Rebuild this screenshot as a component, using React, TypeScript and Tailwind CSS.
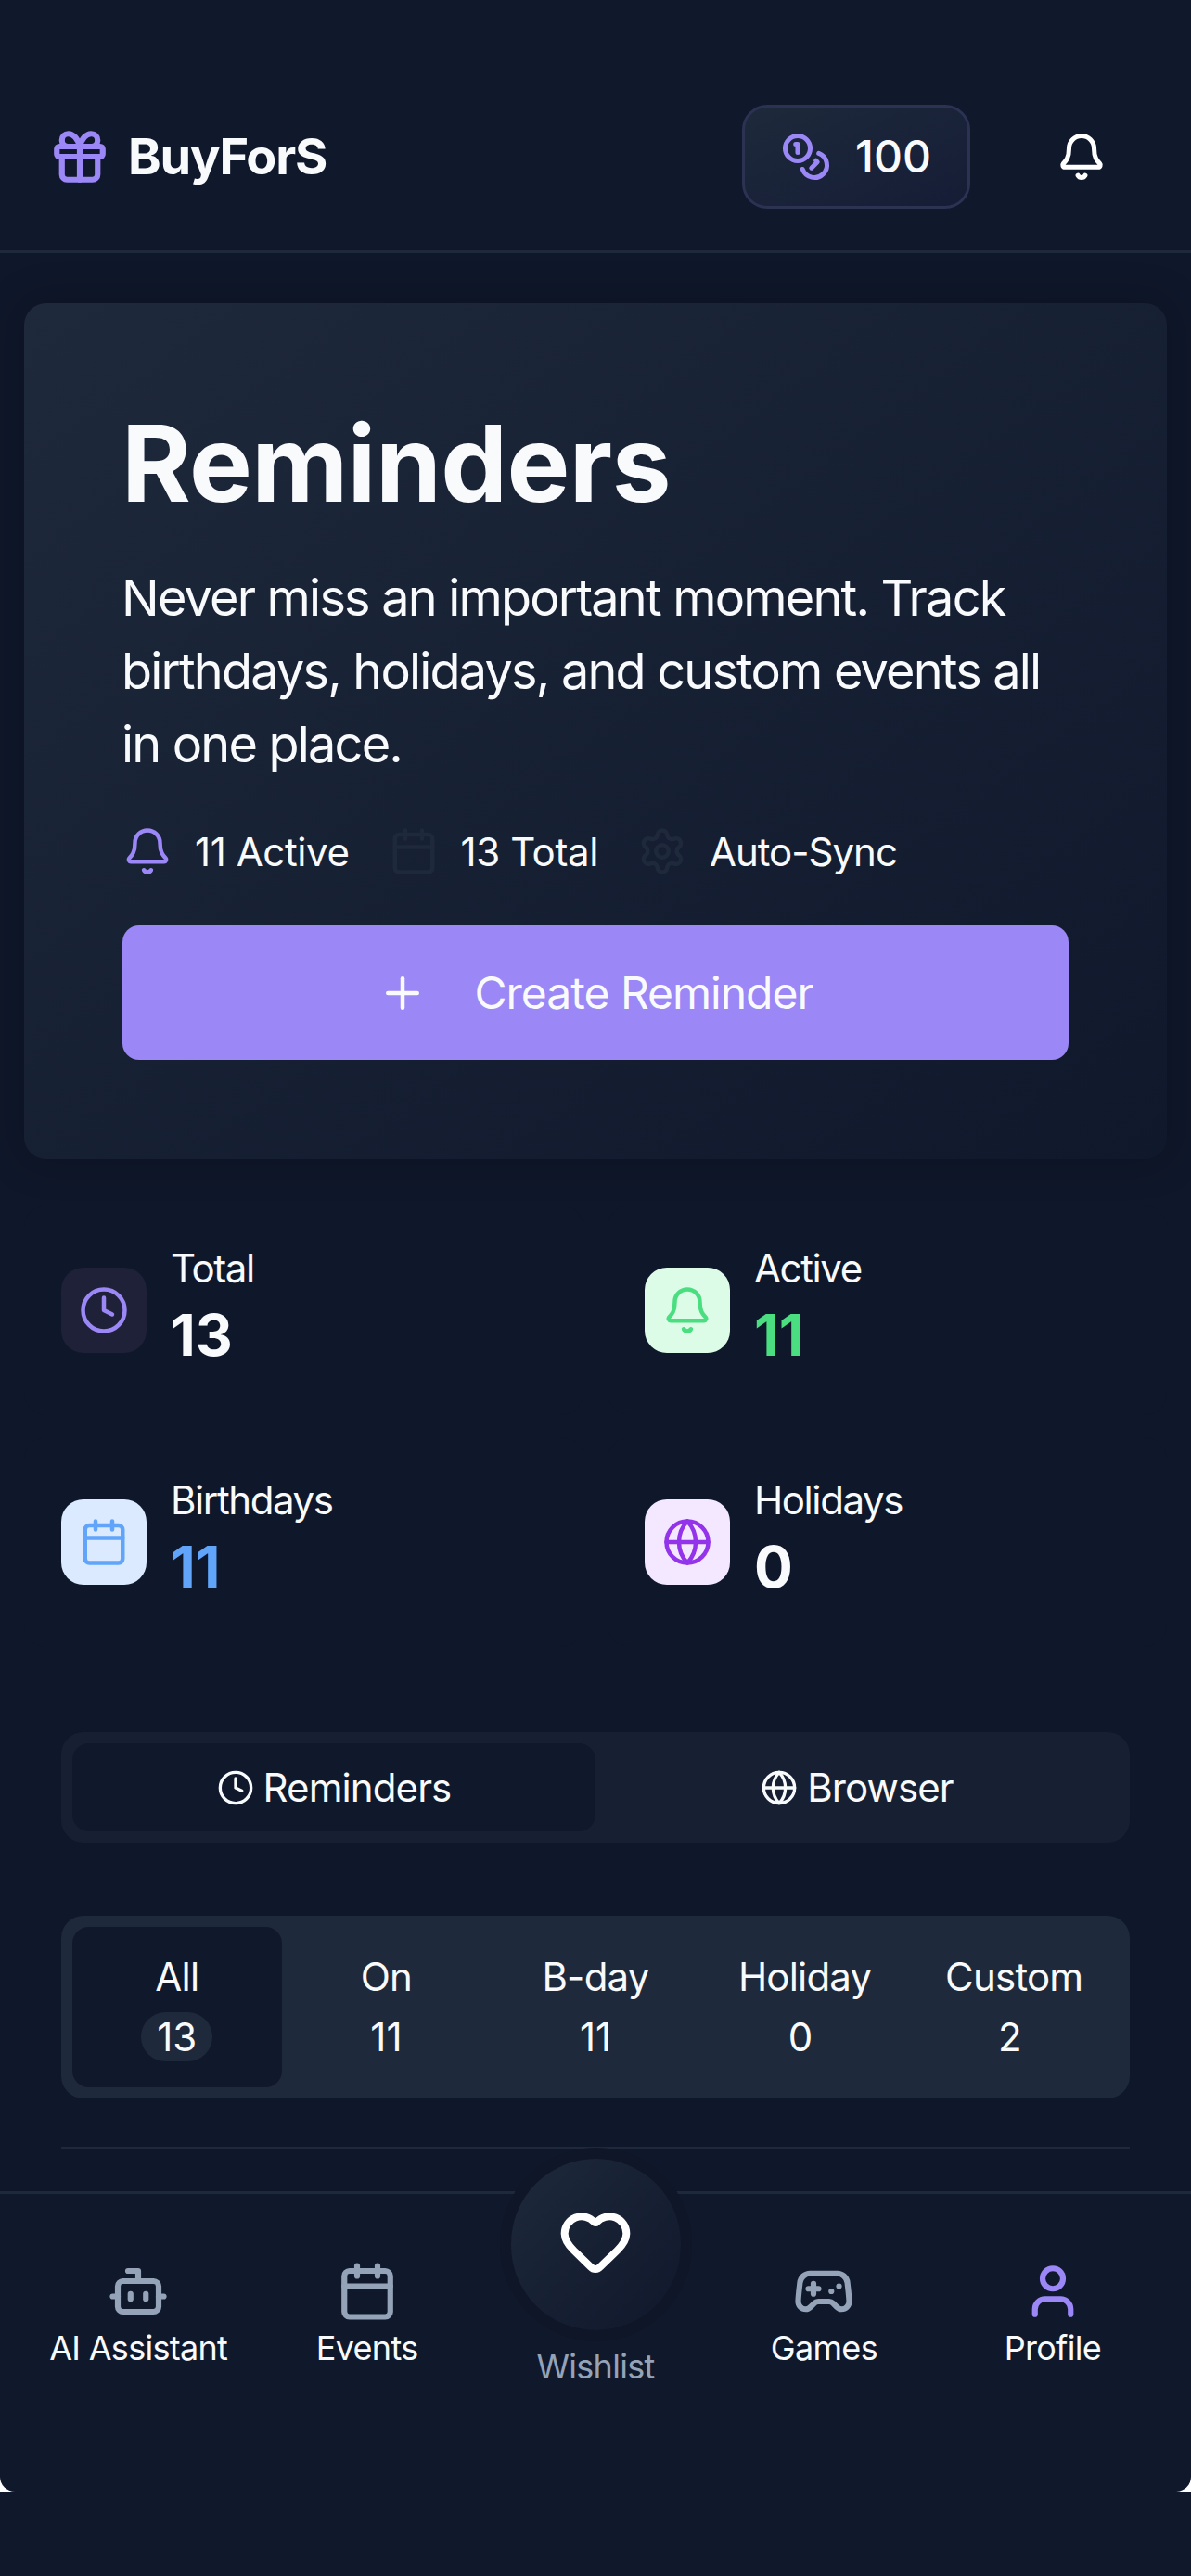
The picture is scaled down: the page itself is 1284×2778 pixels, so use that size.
import { Bell, Bot, Calendar, Clock, Coins, Gamepad2, Gift, Globe, Heart, Plus, Settings, User } from "lucide-react";

const stats = [
  { label: "Total", value: "13", Icon: Clock, box: "bg-[#1e2138]", icon: "text-[#9b87f5]", val: "text-[#f8fafc]" },
  { label: "Active", value: "11", Icon: Bell, box: "bg-[#dcfce7]", icon: "text-[#4ade80]", val: "text-[#4ade80]" },
  { label: "Birthdays", value: "11", Icon: Calendar, box: "bg-[#dbeafe]", icon: "text-[#60a5fa]", val: "text-[#60a5fa]" },
  { label: "Holidays", value: "0", Icon: Globe, box: "bg-[#f3e8ff]", icon: "text-[#9333ea]", val: "text-[#f8fafc]" },
];

const filters = [
  { label: "All", count: "13", active: true },
  { label: "On", count: "11" },
  { label: "B-day", count: "11" },
  { label: "Holiday", count: "0", nudge: true },
  { label: "Custom", count: "2", nudge: true },
];

export default function App() {
  return (
    <div className="h-[2778px] bg-[#10182c] font-['Inter',sans-serif] text-[#f8fafc]">
      <div className="flex h-[2687px] flex-col overflow-hidden bg-white">
        {/* Header */}
        <header className="flex h-[273px] shrink-0 items-center justify-between border-b-[3px] border-[#1e293b] bg-[#10182c] pb-[45px] pl-[53px] pr-[91px] pt-[113px]">
          <div className="flex items-center gap-[19px]">
            <Gift size={66} strokeWidth={2.25} className="text-[#9b87f5]" />
            <span className="text-[54px] font-bold leading-none tracking-[-1.2px]">BuyForS</span>
          </div>
          <div className="flex items-center gap-[93px]">
            <div className="flex h-[112px] w-[246px] items-center justify-center gap-[26px] rounded-[27px] border-[3px] border-[#2b3252] bg-gradient-to-br from-[#1e293b] to-[#151d36]">
              <Coins size={54} strokeWidth={2.25} className="text-[#9b87f5]" />
              <span className="text-[48px] font-medium leading-none">100</span>
            </div>
            <Bell size={54} strokeWidth={2.25} className="text-white" />
          </div>
        </header>

        {/* Content */}
        <main className="min-h-0 flex-1 overflow-hidden bg-[#0f172a] px-[26px] pt-[54px]">
          <section className="rounded-[24px] bg-gradient-to-br from-[#1e293b] to-[#10182c] px-[106px] pb-[107px] pt-[107px] shadow-[0_0_40px_rgba(8,12,24,0.35)]">
            <h1 className="-ml-[1px] text-[114px] font-bold leading-[132px] tracking-[-0.6px]">Reminders</h1>
            <p className="-ml-[1px] mt-[39px] text-[54px] leading-[79px] tracking-[-1.8px]">
              Never miss an important moment. Track birthdays, holidays, and custom events all in one place.
            </p>
            <div className="mt-[49px] flex h-[54px] items-center text-[42px] tracking-[-0.4px]">
              <Bell size={54} strokeWidth={2} className="text-[#9b87f5]" />
              <span className="ml-[24px]">11 Active</span>
              <Calendar size={54} strokeWidth={2} className="ml-[42px] text-[#1e293b]" />
              <span className="ml-[24px]">13 Total</span>
              <Settings size={54} strokeWidth={2} className="ml-[42px] text-[#1e293b]" />
              <span className="ml-[24px] tracking-[-1px]">Auto-Sync</span>
            </div>
            <button className="mt-[53px] flex h-[145px] w-full items-center justify-center gap-[50px] rounded-[18px] bg-[#9b87f5] text-[48px] tracking-[-1px]">
              <Plus size={54} strokeWidth={2} />
              Create Reminder
            </button>
          </section>

          {/* Stats */}
          <div className="mt-[50px] grid grid-cols-2 gap-x-[26px] gap-y-[24px]">
            {stats.map(({ label, value, Icon, box, icon, val }) => (
              <div key={label} className="flex h-[226px] items-center gap-[26px] rounded-[24px] bg-[#0f172b] px-[40px]">
                <div className={`flex h-[92px] w-[92px] items-center justify-center rounded-[24px] ${box}`}>
                  <Icon size={54} strokeWidth={2} className={icon} />
                </div>
                <div>
                  <div className="text-[42px] leading-[54px] tracking-[-1.4px]">{label}</div>
                  <div className={`text-[62px] font-bold leading-[90px] ${val}`}>{value}</div>
                </div>
              </div>
            ))}
          </div>

          {/* Tabs */}
          <div className="mx-[40px] mt-[92px] flex h-[119px] items-center rounded-[24px] bg-[#172033] p-[12px]">
            <div className="flex h-full flex-1 items-center justify-center gap-[10px] rounded-[18px] bg-[#10182c] text-[42px] tracking-[-0.9px]">
              <Clock size={40} strokeWidth={2} />
              Reminders
            </div>
            <div className="flex h-full flex-1 items-center justify-center gap-[10px] text-[42px] tracking-[-0.9px]">
              <Globe size={40} strokeWidth={2} />
              Browser
            </div>
          </div>

          {/* Filters */}
          <div className="mx-[40px] mt-[79px] grid h-[197px] grid-cols-5 rounded-[24px] bg-[#1e293b] p-[12px]">
            {filters.map((f) => (
              <div key={f.label} className={`flex flex-col items-center justify-center rounded-[18px] text-[42px] ${f.active ? "bg-[#10182c]" : ""}`}>
                <div className="-mt-[4px] leading-[60px] tracking-[-0.8px]">{f.label}</div>
                <div className={`mt-[8px] flex h-[53px] items-center justify-center rounded-full ${f.active ? "w-[77px] bg-[#1e293b]" : ""} ${f.nudge ? "-ml-[9px]" : ""}`}>{f.count}</div>
              </div>
            ))}
          </div>

          <div className="mx-[40px] mt-[52px] h-[3px] bg-[#1e293b]" />
        </main>

        {/* Bottom nav */}
        <nav className="flex h-[324px] shrink-0 items-start rounded-b-[16px] border-t-[3px] border-[#1e293b] bg-[#10182c] px-[26px] pt-[72px] text-center text-[36px] tracking-[-0.7px]">
          <div className="flex flex-1 flex-col items-center">
            <Bot size={66} strokeWidth={2.25} className="text-[#94a3b8]" />
            <span className="mt-[4px] leading-[48px]">AI Assistant</span>
          </div>
          <div className="flex flex-1 flex-col items-center">
            <Calendar size={66} strokeWidth={2.25} className="text-[#94a3b8]" />
            <span className="mt-[4px] leading-[48px]">Events</span>
          </div>
          <div className="-mt-[122px] flex flex-1 flex-col items-center">
            <div className="flex h-[209px] w-[207px] items-center justify-center rounded-full border-[12px] border-[#0e1627] bg-gradient-to-br from-[#1e293b] to-[#10182c]">
              <Heart size={80} strokeWidth={2.4} className="-mt-[8px] text-white" />
            </div>
            <span className="mt-[3px] leading-[48px] text-[#94a3b8]">Wishlist</span>
          </div>
          <div className="flex flex-1 flex-col items-center">
            <Gamepad2 size={66} strokeWidth={2.25} className="text-[#94a3b8]" />
            <span className="mt-[4px] leading-[48px]">Games</span>
          </div>
          <div className="flex flex-1 flex-col items-center">
            <User size={66} strokeWidth={2.25} className="text-[#9b87f5]" />
            <span className="mt-[4px] leading-[48px]">Profile</span>
          </div>
        </nav>
      </div>
    </div>
  );
}
